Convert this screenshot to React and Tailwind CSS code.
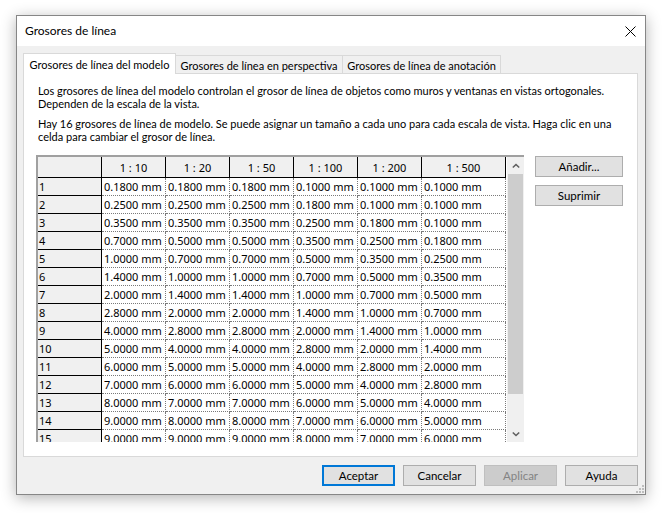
import React from "react";

const rows = [
  ["0.1800", "0.1800", "0.1800", "0.1000", "0.1000", "0.1000"],
  ["0.2500", "0.2500", "0.2500", "0.1800", "0.1000", "0.1000"],
  ["0.3500", "0.3500", "0.3500", "0.2500", "0.1800", "0.1000"],
  ["0.7000", "0.5000", "0.5000", "0.3500", "0.2500", "0.1800"],
  ["1.0000", "0.7000", "0.7000", "0.5000", "0.3500", "0.2500"],
  ["1.4000", "1.0000", "1.0000", "0.7000", "0.5000", "0.3500"],
  ["2.0000", "1.4000", "1.4000", "1.0000", "0.7000", "0.5000"],
  ["2.8000", "2.0000", "2.0000", "1.4000", "1.0000", "0.7000"],
  ["4.0000", "2.8000", "2.8000", "2.0000", "1.4000", "1.0000"],
  ["5.0000", "4.0000", "4.0000", "2.8000", "2.0000", "1.4000"],
  ["6.0000", "5.0000", "5.0000", "4.0000", "2.8000", "2.0000"],
  ["7.0000", "6.0000", "6.0000", "5.0000", "4.0000", "2.8000"],
  ["8.0000", "7.0000", "7.0000", "6.0000", "5.0000", "4.0000"],
  ["9.0000", "8.0000", "8.0000", "7.0000", "6.0000", "5.0000"],
  ["9.0000", "9.0000", "9.0000", "8.0000", "7.0000", "6.0000"],
];

const headers = ["1 : 10", "1 : 20", "1 : 50", "1 : 100", "1 : 200", "1 : 500"];
const colW = ["w-[64px]", "w-[64px]", "w-[64px]", "w-[64px]", "w-[64px]", "w-[84px]"];

function Chevron({ down }) {
  return (
    <svg width="8" height="6" viewBox="0 0 8 6">
      <polyline
        points={down ? "0.8,1.5 4,4.5 7.2,1.5" : "0.8,4.5 4,1.5 7.2,4.5"}
        fill="none"
        stroke="#606060"
        strokeWidth="1.6"
      />
    </svg>
  );
}

function Btn({ children, variant }) {
  const base =
    "w-[73px] h-[21px] flex items-center justify-center text-[11.5px] leading-none box-border";
  if (variant === "default")
    return <div className={base + " bg-[#e1e1e1] border-2 border-[#0078d7] text-black"}>{children}</div>;
  if (variant === "disabled")
    return <div className={base + " bg-[#cccccc] border border-[#bfbfbf] text-[#838383]"}>{children}</div>;
  return <div className={base + " bg-[#e1e1e1] border border-[#adadad] text-black"}>{children}</div>;
}

export default function App() {
  return (
    <div className="w-[665px] h-[513px] bg-white overflow-hidden font-['Lato',sans-serif] text-black">
      <div className="relative ml-[16px] mt-[15px] w-[630px] h-[480px] border border-[#868686] bg-[#f0f0f0] flex flex-col shadow-[0_3px_14px_rgba(0,0,0,0.3)]">
        {/* Title bar */}
        <div className="h-[30px] bg-white flex items-center justify-between pl-[8px] pr-[9px] shrink-0">
          <span className="text-[12px] leading-none">Grosores de línea</span>
          <svg width="11" height="11" viewBox="0 0 11 11">
            <line x1="0.5" y1="0.5" x2="10.5" y2="10.5" stroke="#000" strokeWidth="1" />
            <line x1="10.5" y1="0.5" x2="0.5" y2="10.5" stroke="#000" strokeWidth="1" />
          </svg>
        </div>

        {/* Body */}
        <div className="pl-[6px] pr-[7px] pt-[7px] shrink-0">
          {/* Tabs */}
          <div className="flex items-end h-[20px] text-[11px]">
            <div className="relative z-10 w-[153px] h-[21px] -mb-[1px] bg-white border-l border-t border-r border-[#d9d9d9] flex items-start justify-center pt-[3px]">
              Grosores de línea del modelo
            </div>
            <div className="w-[167px] h-[18px] bg-[#f0f0f0] border-t border-r border-[#d9d9d9] flex items-start justify-center pt-[2px]">
              Grosores de línea en perspectiva
            </div>
            <div className="w-[158px] h-[18px] bg-[#f0f0f0] border-t border-r border-[#d9d9d9] flex items-start justify-center pt-[2px]">
              Grosores de línea de anotación
            </div>
          </div>

          {/* Panel */}
          <div className="h-[384px] bg-white border border-[#d9d9d9] pl-[12px] pt-[10px] text-[11px]">
            <div className="pl-[2px] leading-[13px] whitespace-nowrap">
              <p>
                Los grosores de línea del modelo controlan el grosor de línea de objetos como muros y ventanas en vistas ortogonales.
                <br />
                Dependen de la escala de la vista.
              </p>
              <p className="mt-[7px]">
                Hay 16 grosores de línea de modelo. Se puede asignar un tamaño a cada uno para cada escala de vista. Haga clic en una
                <br />
                celda para cambiar el grosor de línea.
              </p>
            </div>

            <div className="flex mt-[12px]">
              {/* Grid */}
              <div className="w-[488px] h-[287px] border-t-2 border-l-2 border-[#a0a0a0] bg-white flex box-border font-['Noto_Sans',sans-serif]">
                <div className="w-[469px] h-[285px] overflow-hidden">
                  {/* header row */}
                  <div className="flex h-[21px]">
                    <div className="w-[64px] h-[21px] bg-[#f0f0f0] border-r border-b border-black box-border" />
                    {headers.map((h, i) => (
                      <div
                        key={h}
                        className={
                          colW[i] +
                          " h-[21px] bg-[#f0f0f0] border-r border-b border-black box-border flex items-center justify-center leading-none"
                        }
                      >
                        {h}
                      </div>
                    ))}
                  </div>
                  {rows.map((r, ri) => (
                    <div key={ri} className="flex h-[18px]">
                      <div className="w-[64px] h-[18px] bg-[#f0f0f0] border-r border-b border-black box-border pl-[1px] flex items-center leading-none">
                        {ri + 1}
                      </div>
                      {r.map((v, ci) => (
                        <div
                          key={ci}
                          className={
                            colW[ci] +
                            " h-[18px] border-r border-b border-dotted border-[#7a7a7a] box-border pl-[2px] flex items-center leading-none whitespace-nowrap"
                          }
                        >
                          {v} mm
                        </div>
                      ))}
                    </div>
                  ))}
                </div>
                {/* scrollbar */}
                <div className="w-[17px] h-[285px] bg-[#f0f0f0] flex flex-col shrink-0">
                  <div className="h-[17px] flex items-center justify-center">
                    <Chevron />
                  </div>
                  <div className="h-[220px] w-[15px] ml-[1px] bg-[#cdcdcd]" />
                  <div className="flex-1" />
                  <div className="h-[17px] flex items-center justify-center">
                    <Chevron down />
                  </div>
                </div>
              </div>

              {/* Side buttons */}
              <div className="ml-[11px] pt-[1px] flex flex-col gap-[8px] text-[11.5px]">
                <div className="w-[88px] h-[21px] bg-[#e1e1e1] border border-[#adadad] flex items-center justify-center leading-none">
                  Añadir...
                </div>
                <div className="w-[88px] h-[21px] bg-[#e1e1e1] border border-[#adadad] flex items-center justify-center leading-none">
                  Suprimir
                </div>
              </div>
            </div>
          </div>
        </div>

        {/* Bottom buttons */}
        <div className="mt-[8px] flex justify-end gap-[8px] pr-[7px]">
          <Btn variant="default">Aceptar</Btn>
          <Btn>Cancelar</Btn>
          <Btn variant="disabled">Aplicar</Btn>
          <Btn>Ayuda</Btn>
        </div>

        {/* size grip */}
        <svg className="absolute right-[1px] bottom-[1px]" width="8" height="8" viewBox="0 0 8 8">
          <rect x="6" y="0" width="2" height="2" fill="#bdbdbd" />
          <rect x="3" y="3" width="2" height="2" fill="#bdbdbd" />
          <rect x="6" y="3" width="2" height="2" fill="#bdbdbd" />
          <rect x="0" y="6" width="2" height="2" fill="#bdbdbd" />
          <rect x="3" y="6" width="2" height="2" fill="#bdbdbd" />
          <rect x="6" y="6" width="2" height="2" fill="#bdbdbd" />
        </svg>
      </div>
    </div>
  );
}
